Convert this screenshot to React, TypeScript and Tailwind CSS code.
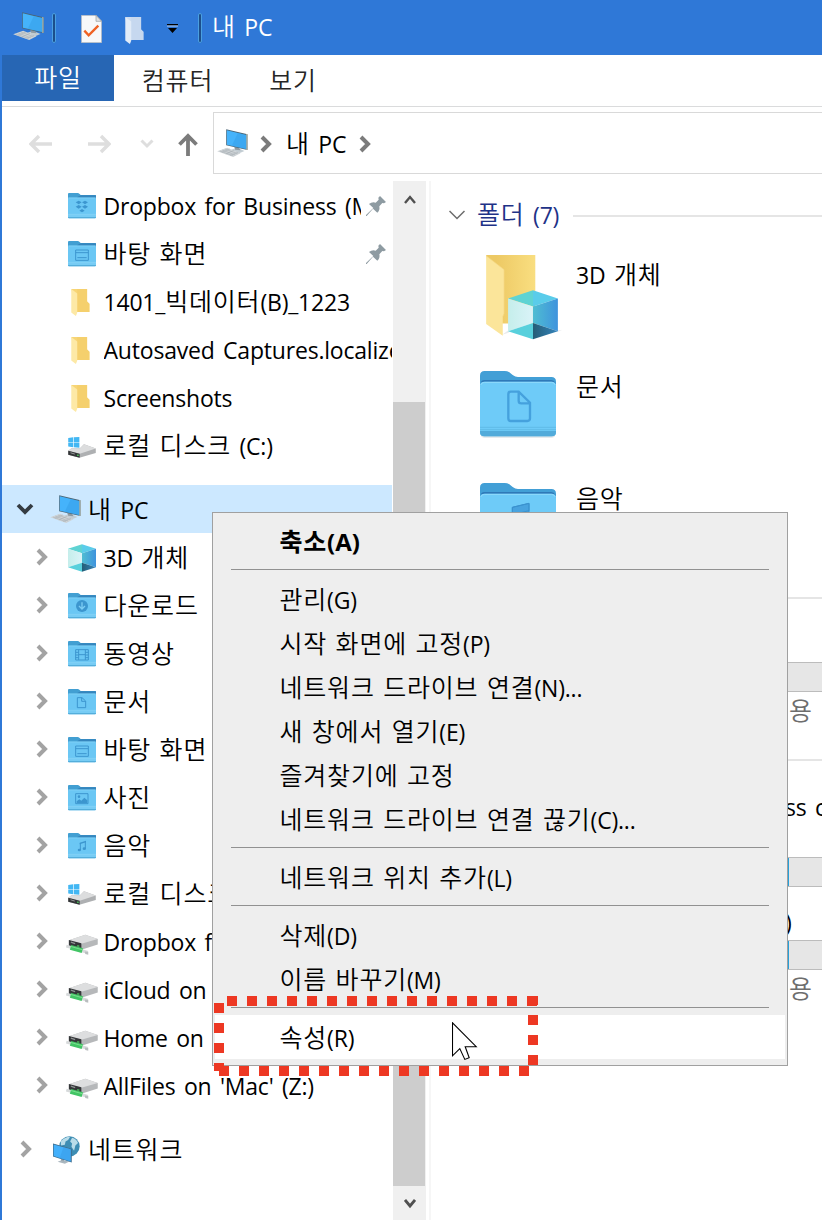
import React from "react";

const hangul = /([\uac00-\ud7a3]+)/;

function Txt({ children, bold = false, className = "" }: { children: string; bold?: boolean; className?: string }) {
  return (
    <span className={`inline-flex h-[26px] items-baseline whitespace-pre leading-none before:inline-block before:h-[23px] before:w-0 before:content-[''] ${className}`}>
      {children.split(hangul).filter(Boolean).map((part, i) =>
        hangul.test(part) ? (
          <span
            key={i}
            className={`font-['Noto_Sans_CJK_KR','Noto_Sans_KR',sans-serif] text-[25px] leading-none tracking-[0.8px] ${bold ? "font-bold" : "font-[350]"}`}
          >
            {part}
          </span>
        ) : (
          <span
            key={i}
            className={`font-['Open_Sans','Noto_Sans',sans-serif] leading-none [word-spacing:2.7px] ${bold ? "text-[24px] font-bold" : "text-[23px] font-normal tracking-[-0.2px]"}`}
          >
            {part}
          </span>
        ),
      )}
    </span>
  );
}

function PcIcon() {
  return (
    <svg viewBox="0 0 92 84" className="h-[28px] w-[31px] shrink-0">
      <polygon points="42,62 60,56 82,66 66,73" fill="#c3cdd3" />
      <polygon points="50,50 64,54 70,64 54,62" fill="#8f9aa1" />
      <polygon points="27,1 91,16 91,63 27,49" fill="#4b6575" />
      <polygon points="87,15 91,16 91,63 87,62" fill="#b8b6a4" />
      <polygon points="29,4 87,18 87,60 29,47" fill="#45b3fb" />
      <polygon points="62,12 87,18 87,60 44,50" fill="#339de8" opacity=".5" />
      <polygon points="0,67 30,56 70,73 48,84" fill="#ced3d6" />
      <path d="M8 66l39 14M15 63l39 15M23 60l38 14M14 70l24-10M26 75l24-11M39 79l24-9" stroke="#a3abb0" strokeWidth="1.5" fill="none" />
    </svg>
  );
}

function Glyph({ kind }: { kind: string }) {
  const s = { fill: "none", stroke: "#3c96cf", strokeWidth: 3 };
  switch (kind) {
    case "dropbox":
      return (
        <path fill="#3c96cf" d="M32 23l9 5-9 6-9-6zM51 23l9 5-9 6-9-6zM32 36l9 5-9 6-9-6zM51 36l9 5-9 6-9-6zM42 48l8 5-8 5-8-5z" />
      );
    case "desktop":
      return <path {...s} d="M23 27h38v31H23zM23 35h38M28 50h28" />;
    case "download":
      return (
        <g>
          <circle cx="42" cy="39" r="18" fill="#3c96cf" />
          <path d="M42 28v20M33 39l9 9 9-9" stroke="#7ccdf4" strokeWidth="4" fill="none" />
        </g>
      );
    case "film":
      return <path {...s} d="M23 26h38v31H23zM32 26v31M52 26v31M32 41h20M23 34h9M23 42h9M23 50h9M52 34h9M52 42h9M52 50h9" />;
    case "doc":
      return <path {...s} d="M28 26h14l11 10v20H28zM41 26v11h11" />;
    case "picture":
      return (
        <g>
          <path {...s} d="M23 26h37v30H23z" />
          <circle cx="33" cy="35" r="4" fill="#3c96cf" />
          <path d="M26 54v-5l8-6 6 4 9-9 9 8v8z" fill="#3c96cf" />
        </g>
      );
    default:
      return (
        <g fill="#3c96cf">
          <path d="M35 29l19-6v5l-19 6z" />
          <path d="M37 30v21M52 26v21" stroke="#3c96cf" strokeWidth="3" />
          <ellipse cx="34" cy="51" rx="5" ry="4" />
          <ellipse cx="49" cy="47" rx="5" ry="4" />
        </g>
      );
  }
}

function BlueFolder({ kind }: { kind: string }) {
  return (
    <svg viewBox="0 0 84 78" className="h-[26px] w-[28px] shrink-0">
      <path d="M0 3q0-3 3-3h26q3 0 5 2l4 4h43q3 0 3 3v16H0z" fill="#429fd2" />
      <path d="M28 12l10-5h46v8H28z" fill="#3585bd" />
      <path d="M2 14h80l2 3v56q0 3-3 3H3q-3 0-3-3V17z" fill="#6bc7f4" />
      <path d="M1 15h82" stroke="#7fd0f6" strokeWidth="3" />
      <path d="M0 64h84M0 69h84" stroke="#91d8f7" strokeWidth="2" />
      <path d="M0 72h84v1q0 3-3 3H3q-3 0-3-3z" fill="#54aedb" />
      <Glyph kind={kind} />
    </svg>
  );
}

function BigBlueFolder({ music = false }: { music?: boolean }) {
  return (
    <svg viewBox="0 0 228 204" className="h-[68px] w-[76px] shrink-0">
      <path d="M2 188q0 12 12 12h200q12 0 12-12z" fill="#dfe3e6" />
      <path d="M0 14Q0 0 14 0h60q8 0 14 4l10 8q8 6 16 6h100q14 0 14 14v30H0z" fill="#429fd6" />
      <path d="M4 31q4-4 10-4h200q8 0 12 8v8H2z" fill="#2f79b8" />
      <path d="M0 45q0-13 13-13h202q13 0 13 13v138q0 13-13 13H13q-13 0-13-13z" fill="#6ecbf8" />
      <path d="M2 42q3-8 12-8h200q9 0 12 8" stroke="#91dbfc" strokeWidth="3" fill="none" />
      <path d="M0 180h228v3q0 13-13 13H13q-13 0-13-13z" fill="#52abda" />
      <path d="M0 169h228M0 176h228" stroke="#5bb4df" strokeWidth="2" />
      {music ? (
        <path d="M97 73l50-12v84M97 73v84M97 73l50-12v22l-50 12z" fill="#48a3df" stroke="#3a92cf" strokeWidth="3" />
      ) : (
        <path d="M92 62h24l34 33v47q0 8-8 8H92q-7 0-7-8V70q0-8 7-8zM116 62v27q0 8 8 8h26" fill="none" stroke="#45a1dd" strokeWidth="7" />
      )}
    </svg>
  );
}

function YellowFolder({ pale = false }: { pale?: boolean }) {
  return (
    <svg viewBox="0 0 56 82" className="h-[27px] w-[19px] shrink-0">
      <path d="M0 0h48v38l7 7v25H16z" fill={pale ? "#cddcf0" : "#f7d576"} />
      <path d="M18 0h30v38l7 7v25H18z" fill={pale ? "#c6d8ef" : "#f5d06d"} />
      <path d="M0 0l18 14v58l-4 10L0 71z" fill={pale ? "#e1ebf7" : "#fde9a6"} />
    </svg>
  );
}

function CubeFaces({ id }: { id: string }) {
  return (
    <g>
      <defs>
        <linearGradient id={`${id}-right`}>
          <stop offset="0" stopColor="#4fbdd2" />
          <stop offset="1" stopColor="#3f93dd" />
        </linearGradient>
        <linearGradient id={`${id}-left`}>
          <stop offset="0" stopColor="#c5eeeb" />
          <stop offset="1" stopColor="#daf3f8" />
        </linearGradient>
        <linearGradient id={`${id}-base`}>
          <stop offset="0" stopColor="#255d76" />
          <stop offset="1" stopColor="#3484bb" />
        </linearGradient>
      </defs>
      <path d="M0 25L75 0v49z" fill="#5fd3d3" />
      <path d="M75 0l75 25-75 24z" fill="#5accea" />
      <path d="M0 25l75 24v50L0 124z" fill={`url(#${id}-left)`} />
      <path d="M75 49l75-24v99L75 99z" fill={`url(#${id}-right)`} />
      <path d="M0 124l75-25v49z" fill="#58d0dc" />
      <path d="M75 99l75 25-75 24z" fill={`url(#${id}-base)`} />
    </g>
  );
}

function Cube() {
  return (
    <svg viewBox="0 0 150 148" className="h-7 w-7">
      <CubeFaces id="cube-small" />
    </svg>
  );
}

function Folder3D() {
  return (
    <svg viewBox="0 0 234 256" className="h-[85px] w-[78px] shrink-0">
      <defs>
        <linearGradient id="folder-back">
          <stop offset="0.2" stopColor="#edc964" />
          <stop offset="1" stopColor="#f9de80" />
        </linearGradient>
      </defs>
      <path d="M48 240l20-14v8zM212 228l18-3-14 6z" fill="#e9ebec" />
      <path d="M0 0h148v206H40z" fill="url(#folder-back)" />
      <path d="M0 2l54 42v132l-4 10v57L0 208z" fill="#fbe59a" />
      <path d="M0 2l54 42v132l-4 10" fill="none" stroke="#f5d681" strokeWidth="2" />
      <g transform="translate(66 106)">
        <CubeFaces id="cube-large" />
      </g>
    </svg>
  );
}

function Drive({ net = false }: { net?: boolean }) {
  return net ? (
    <svg viewBox="0 0 96 64" className="mt-[5px] h-[21px] w-[32px] shrink-0">
      <path d="M8 19L58 2l38 13v17L46 48 8 37z" fill="#b6b8ba" />
      <path d="M8 19L58 2l38 13-50 15z" fill="#dddedf" />
      <path d="M8 18l38 10v18L8 36z" fill="#343638" />
      <path d="M14 25l13 4" stroke="#8d9092" strokeWidth="4" />
      <path d="M33 36l7 1" stroke="#4dd060" strokeWidth="4" />
      <path d="M0 37l14 4M48 51l18 5" stroke="#d7dadb" strokeWidth="9" />
      <path d="M13 41l36 10" stroke="#42c565" strokeWidth="15" />
      <path d="M14 38l35 10" stroke="#79df8d" strokeWidth="3" />
      <path d="M57 53l10 2v8l-9-2z" fill="#b9bdbf" />
    </svg>
  ) : (
    <svg viewBox="0 0 84 64" className="mt-[2px] h-[21px] w-[28px] shrink-0">
      <path d="M0 3l15-2v14H0zM17 1l17-1v15H17zM0 17h15v14l-15-2zM17 17h17v16l-17-2z" fill="#43b7f3" />
      <path d="M0 42l10-8h26l12-12 36 13v14L34 63 0 54z" fill="#aeb0b2" />
      <path d="M0 42l10-8h26l12-12 36 13-49 16z" fill="#dcddde" />
      <path d="M0 42l35 9v12L0 54z" fill="#333537" />
      <path d="M7 48l13 4" stroke="#96999a" strokeWidth="3" />
      <path d="M27 55l5 1" stroke="#4dd060" strokeWidth="4" />
    </svg>
  );
}

function NetworkIcon() {
  return (
    <svg viewBox="0 0 82 84" className="h-[28px] w-[27px] shrink-0">
      <circle cx="50" cy="31" r="31" fill="#3e8db3" />
      <path d="M24 16Q36 2 52 2l-6 10-8 4-2 10-12 2zM58 5q14 4 18 16l-8 7-4 16-8-12 2-10-6-6z" fill="#b9dce9" />
      <path d="M14 78l12-5 24 4-14 7z" fill="#aab7bf" />
      <path d="M24 66l10 3v8l-10-2z" fill="#9aa7af" />
      <path d="M0 22l57 16v42L0 62z" fill="#3f6d8c" />
      <path d="M2 25l52 15v37L2 60z" fill="#43b0fb" />
      <path d="M32 34l22 6v37L20 66z" fill="#3799e5" opacity=".5" />
    </svg>
  );
}

function Pin() {
  return (
    <svg viewBox="0 0 60 60" className="h-5 w-5 shrink-0">
      <path d="M42 0l18 18-6 4-5-1-9 10q2 8-2 15l-4 4-13-12L2 60H0v-3l22-21L9 24q9-7 20-4l9-9-1-6z" fill="#8e9ba2" />
    </svg>
  );
}

function Chevron({ color = "#a3a3a3" }: { color?: string }) {
  return (
    <svg viewBox="0 0 12 18" className="h-[18px] w-[12px] shrink-0">
      <path d="M2 2l7 7-7 7" fill="none" stroke={color} strokeWidth="4" />
    </svg>
  );
}

function TreeRow({ icon, label, top = false, pinned = false, chevron = false }: { icon: React.ReactNode; label: string; top?: boolean; pinned?: boolean; chevron?: boolean }) {
  return (
    <div className="flex h-12 shrink-0 items-center">
      <div className={`flex shrink-0 ${top ? "w-[49px] pl-[18px]" : "w-[64px] pl-[34px]"}`}>{chevron && <Chevron />}</div>
      <div className={`flex shrink-0 items-center justify-center ${top ? "w-[30px]" : "w-8"} ${chevron ? "pt-[1px]" : ""}`}>{icon}</div>
      <div className={`flex overflow-hidden py-1 ${top ? "ml-[7px]" : "ml-[5.500px]"} ${pinned ? "w-[257px]" : ""} ${chevron ? "" : "mb-[2px]"}`}>
        <Txt>{label}</Txt>
      </div>
      {pinned && <div className="ml-[5.500px]"><Pin /></div>}
    </div>
  );
}

function MenuItem({ label, bold = false, active = false }: { label: string; bold?: boolean; active?: boolean }) {
  return (
    <div className={`mx-[2px] flex h-11 items-center pl-[64.500px] ${active ? "bg-white" : ""}`}>
      <Txt bold={bold}>{label}</Txt>
    </div>
  );
}

function Separator() {
  return (
    <div className="h-[14px] px-[18px] pt-[6px]">
      <div className="h-px bg-[#919191]" />
    </div>
  );
}

function ContextMenu() {
  return (
    <div className="absolute left-[212px] top-[512px] h-[554px] w-[576px] border border-[#a0a0a0] bg-[#eeeeee] py-[6px]">
      <MenuItem label="축소(A)" bold />
      <Separator />
      <MenuItem label="관리(G)" />
      <MenuItem label="시작 화면에 고정(P)" />
      <MenuItem label="네트워크 드라이브 연결(N)..." />
      <MenuItem label="새 창에서 열기(E)" />
      <MenuItem label="즐겨찾기에 고정" />
      <MenuItem label="네트워크 드라이브 연결 끊기(C)..." />
      <Separator />
      <MenuItem label="네트워크 위치 추가(L)" />
      <Separator />
      <MenuItem label="삭제(D)" />
      <MenuItem label="이름 바꾸기(M)" />
      <Separator />
      <MenuItem label="속성(R)" active />
    </div>
  );
}

function Highlight() {
  return (
    <svg viewBox="0 0 324 80" className="absolute left-[214px] top-[996px] h-20 w-[324px]">
      <g stroke="#ed3823" strokeWidth="10" strokeDasharray="10 10">
        <path d="M13 5H324" />
        <path d="M319 19V70" />
        <path d="M5 75H316" />
        <path d="M5 7V75" />
      </g>
      <path d="M323 0h1v9h-1z" fill="#ed3823" />
    </svg>
  );
}

function Cursor() {
  return (
    <svg viewBox="0 0 26 40" className="absolute left-[452px] top-[1022px] h-10 w-[26px]">
      <path d="M.5.8v33l7.300-7.200 5 10.800 4.400-1.700-4-11h11z" fill="#fff" stroke="#000" strokeWidth="1.1" />
    </svg>
  );
}

function Sidebar() {
  return (
    <div className="flex h-full w-[390px] flex-col overflow-hidden pt-[1px]">
      <TreeRow icon={<BlueFolder kind="dropbox" />} label="Dropbox for Business (Mac)" pinned />
      <TreeRow icon={<BlueFolder kind="desktop" />} label="바탕 화면" pinned />
      <TreeRow icon={<div className="pr-[4px]"><YellowFolder /></div>} label="1401_빅데이터(B)_1223" />
      <TreeRow icon={<div className="pr-[4px]"><YellowFolder /></div>} label="Autosaved Captures.localized" />
      <TreeRow icon={<div className="pr-[4px]"><YellowFolder /></div>} label="Screenshots" />
      <TreeRow icon={<Drive />} label="로컬 디스크 (C:)" />
      <div className="mt-[15px] flex h-12 shrink-0 items-center bg-[#cce8ff] pl-[14px]">
        <svg viewBox="0 0 18 12" className="h-3 w-[18px]">
          <path d="M2 2l7 7 7-7" fill="none" stroke="#343b42" strokeWidth="3.8" />
        </svg>
        <div className="ml-[16px] mr-[7px]"><PcIcon /></div>
        <Txt>내 PC</Txt>
      </div>
      <TreeRow chevron icon={<Cube />} label="3D 개체" />
      <TreeRow chevron icon={<BlueFolder kind="download" />} label="다운로드" />
      <TreeRow chevron icon={<BlueFolder kind="film" />} label="동영상" />
      <TreeRow chevron icon={<BlueFolder kind="doc" />} label="문서" />
      <TreeRow chevron icon={<BlueFolder kind="desktop" />} label="바탕 화면" />
      <TreeRow chevron icon={<BlueFolder kind="picture" />} label="사진" />
      <TreeRow chevron icon={<BlueFolder kind="music" />} label="음악" />
      <TreeRow chevron icon={<Drive />} label="로컬 디스크 (C:)" />
      <TreeRow chevron icon={<Drive net />} label="Dropbox for" />
      <TreeRow chevron icon={<Drive net />} label="iCloud on" />
      <TreeRow chevron icon={<Drive net />} label="Home on" />
      <TreeRow chevron icon={<Drive net />} label="AllFiles on 'Mac' (Z:)" />
      <div className="h-[16px] shrink-0" />
      <TreeRow top chevron icon={<NetworkIcon />} label="네트워크" />
    </div>
  );
}

function ScrollBar() {
  return (
    <div className="ml-px flex h-full w-[33px] flex-col bg-[#f0f0f0]">
      <div className="flex h-[221px] justify-center pt-[13px]">
        <svg viewBox="0 0 12 11" className="h-[11px] w-3">
          <path d="M1 9l5-6 5 6" fill="none" stroke="#505050" strokeWidth="2.4" />
        </svg>
      </div>
      <div className="h-[784px] w-8 bg-[#cdcdcd]" />
      <div className="flex justify-center pt-[12px]">
        <svg viewBox="0 0 12 11" className="h-[11px] w-3">
          <path d="M1 2l5 6 5-6" fill="none" stroke="#505050" strokeWidth="2.8" />
        </svg>
      </div>
    </div>
  );
}

function Content() {
  return (
    <div className="ml-[3px] flex h-full min-w-0 flex-1 flex-col overflow-hidden border-l-2 border-[#f6f6f6]">
      <div className="flex h-[68px] shrink-0 items-center pl-[18px]">
        <svg viewBox="0 0 16 10" className="h-[10px] w-4 shrink-0">
          <path d="M.5 1l7.500 7.500L15.500 1" fill="none" stroke="#6b6b6b" strokeWidth="1.5" />
        </svg>
        <Txt className="mb-[2px] ml-3 w-[96px] shrink-0 text-[#1e3287]">폴더 (7)</Txt>
        <div className="mt-[2px] h-[2px] flex-1 bg-[#e5e5e5]" />
      </div>
      <div className="flex h-28 shrink-0 items-start pl-[55px] pt-[6px]">
        <Folder3D />
        <Txt className="ml-[12px] mt-[6px]">3D 개체</Txt>
      </div>
      <div className="flex h-28 shrink-0 items-start pl-[49px] pt-[10px]">
        <BigBlueFolder />
        <Txt className="ml-5 mt-[2px]">문서</Txt>
      </div>
      <div className="flex h-28 shrink-0 items-start pl-[49px] pt-[10px]">
        <BigBlueFolder music />
        <Txt className="ml-5 mt-[2px]">음악</Txt>
      </div>
      <div className="mt-[12px] h-[2px] shrink-0 bg-[#e5e5e5]" />
      <div className="mt-[63px] h-[30px] shrink-0 border-y border-[#bcbcbc] bg-[#e6e6e6]" />
      <div className="h-[67px] shrink-0 pl-[358px] pt-[5px] text-[#6d6d6d]"><Txt>용</Txt></div>
      <div className="h-[2px] shrink-0 bg-[#e5e5e5]" />
      <div className="h-[96px] shrink-0 pl-[354px] pt-[32px]"><Txt>ss c</Txt></div>
      <div className="h-[30px] shrink-0 border-y border-[#bcbcbc] bg-[#e6e6e6]"><div className="h-full w-[358px] bg-[#26a0da]" /></div>
      <div className="h-[53px] shrink-0 pl-[354px] pt-[21px]"><Txt>)</Txt></div>
      <div className="h-[30px] shrink-0 border-y border-[#bcbcbc] bg-[#e6e6e6]"><div className="h-full w-[358px] bg-[#26a0da]" /></div>
      <div className="shrink-0 pl-[358px] pt-[5px] text-[#6d6d6d]"><Txt>용</Txt></div>
    </div>
  );
}

export default function App() {
  return (
    <div className="relative flex h-[1220px] w-[822px] flex-col overflow-hidden bg-white text-black">
      <div className="flex h-[55px] shrink-0 items-center bg-[#2f78d7] pl-[13px]">
        <div className="mb-[3px]"><PcIcon /></div>
        <div className="ml-[8px] h-[30px] w-1 rounded-sm border border-[#4b9fe0] bg-[#1c4e8a]" />
        <svg viewBox="0 0 63 84" className="ml-[25px] mt-[3px] h-7 w-[21px]">
          <path d="M1 1h44l17 18v64H1z" fill="#f7f8f9" stroke="#a9acb0" strokeWidth="2" />
          <path d="M45 1v18h17z" fill="#dfe1e3" stroke="#96999c" strokeWidth="2" />
          <path d="M10 47l13 14 29-29" stroke="#ef6224" strokeWidth="7" fill="none" />
        </svg>
        <div className="ml-[23px] mt-[6px]"><YellowFolder pale /></div>
        <svg viewBox="0 0 11 10" className="ml-[23px] mt-[2px] h-[10px] w-[11px]">
          <path d="M0 0h11v1.500H0zM1 4h9L5.500 9z" fill="#000" />
          <path d="M0 1.500h11v1H0z" fill="#bcd3f2" />
        </svg>
        <div className="ml-[20px] h-[30px] w-1 rounded-sm border border-[#4b9fe0] bg-[#1c4e8a]" />
        <Txt className="mb-[3px] ml-[10px] text-white">내 PC</Txt>
      </div>
      <div className="flex min-h-0 flex-1 flex-col border-l-2 border-[#2f78d7]">
        <div className="flex h-[52px] shrink-0 border-b border-[#dadbdc]">
          <div className="flex h-[46px] w-[112px] items-center justify-center bg-[#2766b4] pb-[2px] text-white"><Txt>파일</Txt></div>
          <div className="flex h-[52px] w-[127px] items-center justify-center pb-[3px] text-[#262626]"><Txt>컴퓨터</Txt></div>
          <div className="flex h-[52px] w-[104px] items-center justify-center pb-[3px] text-[#262626]"><Txt>보기</Txt></div>
        </div>
        <div className="flex h-[74px] shrink-0 items-start">
          <div className="flex w-[211px] items-center pl-[27px] pt-[24px]">
            <svg viewBox="0 0 24 20" className="h-5 w-6"><path d="M23 10H3M10 2l-8 8 8 8" fill="none" stroke="#dedede" strokeWidth="3.4" /></svg>
            <svg viewBox="0 0 24 20" className="ml-[34px] h-5 w-6"><path d="M1 10h20M14 2l8 8-8 8" fill="none" stroke="#dedede" strokeWidth="3.4" /></svg>
            <svg viewBox="0 0 14 10" className="ml-[29px] h-[10px] w-[14px]"><path d="M1.500 1.500L7 7l5.500-5.500" fill="none" stroke="#dedede" strokeWidth="3" /></svg>
            <svg viewBox="0 0 20 24" className="ml-[24px] mt-[2px] h-6 w-5"><path d="M10 23V3M1.500 11.500L10 3l8.500 8.500" fill="none" stroke="#7b7b7b" strokeWidth="3.8" /></svg>
          </div>
          <div className="mt-[5px] flex h-[62px] flex-1 items-center border border-r-0 border-[#d9d9d9] pl-[3px]">
            <PcIcon />
            <div className="ml-[12px] mt-[1px]"><Chevron color="#7b7b7b" /></div>
            <Txt className="mb-[1px] ml-[14px]">내 PC</Txt>
            <div className="ml-[13px] mt-[1px]"><Chevron color="#7b7b7b" /></div>
          </div>
        </div>
        <div className="flex min-h-0 flex-1">
          <Sidebar />
          <ScrollBar />
          <Content />
        </div>
      </div>
      <ContextMenu />
      <Highlight />
      <Cursor />
    </div>
  );
}
